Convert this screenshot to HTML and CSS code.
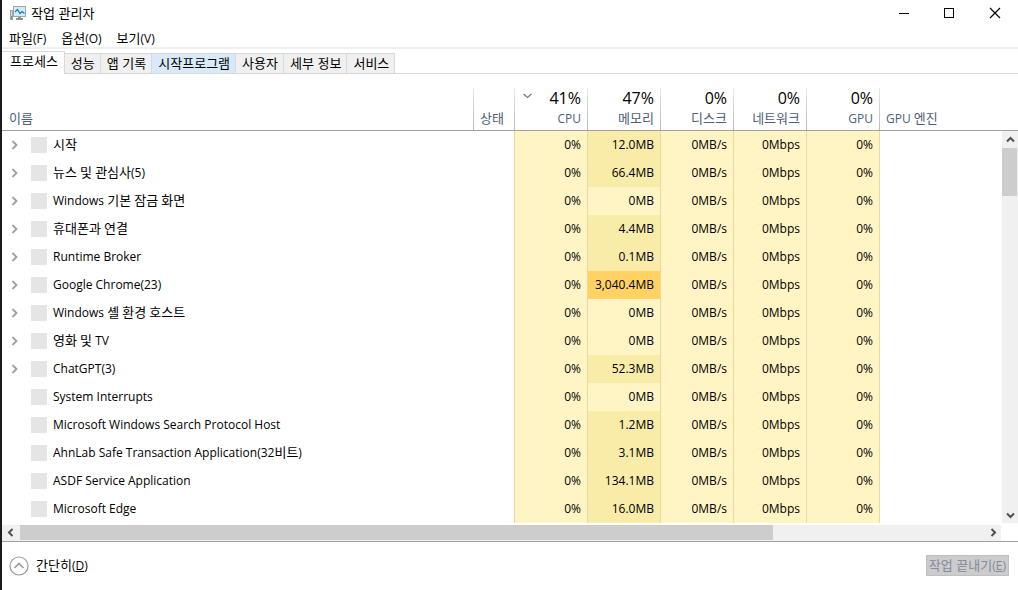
FILE: index.html
```html
<!DOCTYPE html>
<html lang="ko">
<head>
<meta charset="utf-8">
<title>작업 관리자</title>
<link rel="stylesheet" href="styles.css">
</head>
<body>
<div class="window">
  <header class="titlebar">
    <svg class="app-icon" width="16" height="16" viewBox="0 0 16 16">
      <rect x="0.5" y="5.500" width="2" height="9" fill="#d9dcde" stroke="#a0a5a9"/>
      <rect x="1" y="11" width="1" height="3" fill="#4caf50"/>
      <rect x="3.500" y="1.500" width="12" height="10" fill="#d3ecf8" stroke="#a0a5a9"/>
      <path d="M5 7l2.500-2.500L10 8.500 12 6.500l2.500 2" fill="none" stroke="#1b7bb5" stroke-width="1.200"/>
      <path d="M8 12h3v1h2v2H6v-2h2z" fill="#8b9196"/>
    </svg>
    <h1 class="title">작업 관리자</h1>
    <div class="controls">
      <button class="control" aria-label="최소화"><svg width="12" height="12" viewBox="0 0 12 12"><path d="M2 6.500h10" stroke="#000"/></svg></button>
      <button class="control" aria-label="최대화"><svg width="12" height="12" viewBox="0 0 12 12"><rect x="1.500" y="1.500" width="9" height="9" fill="none" stroke="#000"/></svg></button>
      <button class="control" aria-label="닫기"><svg width="12" height="12" viewBox="0 0 12 12"><path d="M1 1l10 10M11 1 1 11" stroke="#000" stroke-width="1.200"/></svg></button>
    </div>
  </header>
  <nav class="menu">
    <button class="menu-item">파일<span class="latin">(F)</span></button>
    <button class="menu-item">옵션<span class="latin">(O)</span></button>
    <button class="menu-item">보기<span class="latin">(V)</span></button>
  </nav>
  <div class="tabs" role="tablist">
    <button class="tab tab-active" role="tab" aria-selected="true">프로세스</button>
    <button class="tab" role="tab">성능</button>
    <button class="tab" role="tab">앱 기록</button>
    <button class="tab tab-hover" role="tab">시작프로그램</button>
    <button class="tab" role="tab">사용자</button>
    <button class="tab" role="tab">세부 정보</button>
    <button class="tab" role="tab">서비스</button>
  </div>
  <main class="list">
    <table class="processes">
      <colgroup><col class="col-name"><col class="col-status"><col class="col-num"><col class="col-num"><col class="col-num"><col class="col-num"><col class="col-num"><col></colgroup>
      <thead>
        <tr>
          <th class="left">이름</th>
          <th class="left">상태</th>
          <th><div class="usage"><svg class="sort" width="9" height="6" viewBox="0 0 9 6"><path d="M0.500 1l4 3.500 4-3.500" fill="none" stroke="#6d7f92" stroke-width="1.300"/></svg><span>41%</span></div><span class="latin">CPU</span></th>
          <th><div class="usage">47%</div>메모리</th>
          <th><div class="usage">0%</div>디스크</th>
          <th><div class="usage">0%</div>네트워크</th>
          <th><div class="usage">0%</div><span class="latin">GPU</span></th>
          <th class="left"><span class="latin">GPU </span>엔진</th>
        </tr>
      </thead>
      <tbody id="rows"></tbody>
    </table>
    <div class="side">
      <div class="side-head"></div>
      <div class="vbar">
        <button class="arrow" aria-label="위로"><svg width="9" height="7" viewBox="0 0 9 7"><path d="M1 5.500 4.500 2 8 5.500" fill="none" stroke="#505050" stroke-width="2"/></svg></button>
        <div class="vthumb"></div>
        <button class="arrow arrow-down" aria-label="아래로"><svg width="9" height="7" viewBox="0 0 9 7"><path d="M1 1.500 4.500 5 8 1.500" fill="none" stroke="#505050" stroke-width="2"/></svg></button>
      </div>
    </div>
  </main>
  <div class="hbar">
    <button class="arrow" aria-label="왼쪽"><svg width="7" height="9" viewBox="0 0 7 9"><path d="M5.500 1 2 4.500 5.500 8" fill="none" stroke="#505050" stroke-width="2"/></svg></button>
    <div class="hlane"><div class="hthumb"></div></div>
    <button class="arrow" aria-label="오른쪽"><svg width="7" height="9" viewBox="0 0 7 9"><path d="M1.500 1 5 4.500 1.500 8" fill="none" stroke="#505050" stroke-width="2"/></svg></button>
  </div>
  <footer class="footer">
    <button class="fewer"><svg width="20" height="20" viewBox="0 0 20 20"><circle cx="10" cy="10" r="9" fill="none" stroke="#9a9a9a" stroke-width="1.200"/><path d="M5.500 12 10 7.500l4.500 4.500" fill="none" stroke="#9a9a9a" stroke-width="1.600"/></svg><span>간단히<span class="latin">(<u>D</u>)</span></span></button>
    <button class="end-task" disabled>작업 끝내기<span class="latin">(<u>E</u>)</span></button>
  </footer>
</div>
<script src="script.js"></script>
</body>
</html>
```
FILE: styles.css
```css
* { box-sizing: border-box; }

body {
  margin: 0;
  background: #fff;
  color: #000;
  font: 13px/18px "Noto Sans CJK KR", sans-serif;
}

button {
  margin: 0;
  padding: 0;
  border: 0;
  background: none;
  color: inherit;
  font: inherit;
}

svg { display: block; flex: none; }

.latin,
.num {
  font-family: "Open Sans", sans-serif;
  font-size: 12px;
}

.latin { line-height: 1; }

.window {
  display: flex;
  flex-direction: column;
  min-height: 100vh;
  border-left: 2px solid #1b1b1f;
}

.titlebar {
  display: flex;
  align-items: center;
  gap: 5px;
  height: 26px;
  padding-left: 8px;
}

.title { margin: 0; font-size: 13px; font-weight: 400; }

.controls { display: flex; margin-left: auto; }

.control {
  display: flex;
  align-items: center;
  justify-content: center;
  width: 46px;
  height: 26px;
}

.menu {
  display: flex;
  gap: 15px;
  height: 23px;
  padding: 3px 7px;
  border-bottom: 2px solid #f0f0f0;
}

.menu-item { height: 18px; }

.tabs {
  display: flex;
  align-items: flex-end;
  height: 25px;
  box-shadow: inset 0 -1px #d9d9d9;
}

.tab {
  height: 21px;
  padding: 0 5px 2px 6px;
  border: 1px solid #d9d9d9;
  border-left: 0;
  background: #f0f0f0;
}

.tab-active {
  height: 23px;
  padding: 0 6px 5px 8px;
  border-bottom: 0;
  background: #fff;
}

.tab-hover { background: #d8eaf9; }

.list { display: flex; }

.processes {
  flex: 1;
  width: 100%;
  table-layout: fixed;
  border-collapse: separate;
  border-spacing: 0;
}

.col-name { width: 472px; }
.col-status { width: 41px; }
.col-num { width: 73px; }

th {
  height: 57px;
  padding: 0 7px 3px 6px;
  border-bottom: 1px solid #a0a0a0;
  background: linear-gradient(#e8e8e8, #b8b8b8) right bottom / 1px 42px no-repeat;
  color: #4c607a;
  font-weight: 400;
  text-align: right;
  vertical-align: bottom;
  white-space: nowrap;
}

th:last-child { background: none; }

.left { text-align: left; }

th:first-child { padding-left: 7px; }

.usage {
  display: flex;
  justify-content: flex-end;
  height: 20px;
  color: #000;
  font-family: "Open Sans", sans-serif;
  font-size: 16px;
}

.sort { margin: 4px auto 0 2px; }

td {
  height: 28px;
  padding: 0 6px 1px;
  white-space: nowrap;
}

.num {
  border-right: 1px solid #ecd8a0;
  background: #fff4c4;
  text-align: right;
}

.status { border-right: 1px solid #ecd8a0; }

.mid { background: #f9eca8; }
.high { background: #ffd264; }

.process { display: flex; align-items: center; }

.name { padding-bottom: 2px; }

.expand { display: flex; width: 23px; padding-left: 3px; }

.thumb {
  width: 16px;
  height: 16px;
  margin-right: 6px;
  background: #e5e5e5;
}

.side { display: flex; flex-direction: column; width: 16px; }

.side-head { height: 57px; border-bottom: 1px solid #a0a0a0; }

.vbar {
  display: flex;
  flex: 1;
  flex-direction: column;
  background: #f0f0f0;
}

.arrow {
  display: flex;
  align-items: center;
  justify-content: center;
  width: 16px;
  height: 17px;
}

.arrow-down { height: 15px; }

.vthumb {
  width: 15px;
  height: 48px;
  margin-bottom: auto;
  background: #cdcdcd;
}

.hbar {
  display: flex;
  align-items: flex-start;
  height: 16px;
  margin: 2px 17px 0 0;
  background: #f0f0f0;
}

.hbar .arrow { height: 15px; }

.hlane { flex: 1; padding-left: 2px; }

.hthumb { width: 78%; height: 15px; background: #cdcdcd; }

.footer {
  display: flex;
  flex: 1;
  align-items: center;
  justify-content: space-between;
  padding: 0 9px 1px 7px;
  border-top: 1px solid #a0a0a0;
}

.fewer { display: flex; align-items: center; gap: 7px; }

.fewer > span { padding-bottom: 2px; }

.end-task {
  height: 21px;
  padding: 0 2px 2px;
  border: 1px solid #bfbfbf;
  background: #cccccc;
  color: #838a9f;
}
```
FILE: script.js
```js
const processes = [
  ["시작", "12.0MB", true],
  ["뉴스 및 관심사(5)", "66.4MB", true],
  ["Windows 기본 잠금 화면", "0MB", true],
  ["휴대폰과 연결", "4.4MB", true],
  ["Runtime Broker", "0.1MB", true],
  ["Google Chrome(23)", "3,040.4MB", true],
  ["Windows 셸 환경 호스트", "0MB", true],
  ["영화 및 TV", "0MB", true],
  ["ChatGPT(3)", "52.3MB", true],
  ["System Interrupts", "0MB", false],
  ["Microsoft Windows Search Protocol Host", "1.2MB", false],
  ["AhnLab Safe Transaction Application(32비트)", "3.1MB", false],
  ["ASDF Service Application", "134.1MB", false],
  ["Microsoft Edge", "16.0MB", false]
];

const chevron = '<svg width="7" height="10" viewBox="0 0 7 10"><path d="M1.500 1 5.500 5 1.500 9" fill="none" stroke="#a0a0a0" stroke-width="1.800"/></svg>';

function level(memory) {
  const value = parseFloat(memory.replace(",", ""));
  return value > 1000 ? "high" : value > 0 ? "mid" : "";
}

// Latin runs use their own font next to Hangul.
function label(name) {
  return `<span class="name">${name.replace(/[ -~]+/g, '<span class="latin">$&</span>')}</span>`;
}

document.getElementById("rows").innerHTML = processes.map(([name, memory, group]) => `
  <tr>
    <td><div class="process">${group ? `<button class="expand" aria-label="확장">${chevron}</button>` : '<span class="expand"></span>'}<span class="thumb"></span>${label(name)}</div></td>
    <td class="status"></td>
    <td class="num">0%</td>
    <td class="num ${level(memory)}">${memory}</td>
    <td class="num">0MB/s</td>
    <td class="num">0Mbps</td>
    <td class="num">0%</td>
    <td></td>
  </tr>`).join("");
```
